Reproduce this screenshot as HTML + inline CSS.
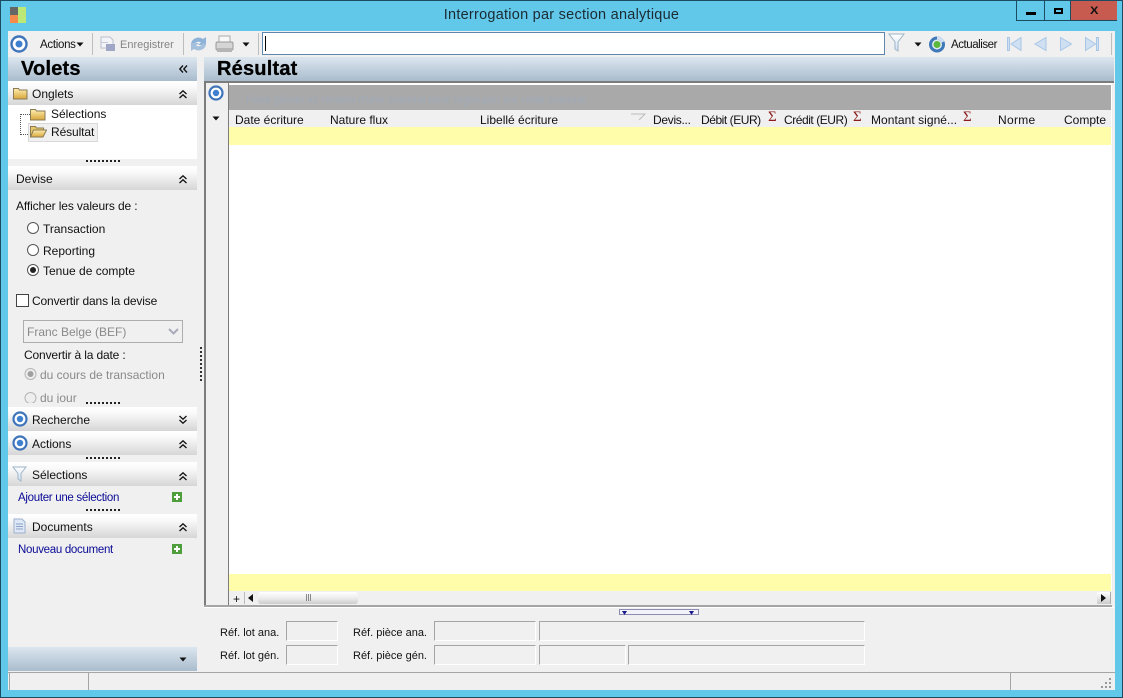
<!DOCTYPE html>
<html lang="fr"><head><meta charset="utf-8"><title>Interrogation par section analytique</title>
<style>
html,body{margin:0;padding:0;width:1123px;height:698px;overflow:hidden;background:#62c8ea}
body{position:relative;font-family:"Liberation Sans",sans-serif;font-size:12px;color:#111}
.a,.t,svg{position:absolute}
.t{white-space:nowrap;line-height:14px}
.ph{position:absolute;left:8px;width:189px;height:24px;background:linear-gradient(#fff,#fafafa 25%,#d6d6d6)}
.grip{position:absolute;left:86px;width:34px;height:2px;background:repeating-linear-gradient(90deg,#222 0 2px,transparent 2px 4px)}
.fld{position:absolute;height:20px;box-sizing:border-box;border:1px solid #a5a5a5;border-right-color:#fff;border-bottom-color:#fff;background:#f0f0f0}
.sig{position:absolute;color:#8b1a1a;font-size:15px;line-height:14px;font-family:"Liberation Serif",serif}
.g{color:#8a8a8a}
.l{color:#0a0a96;font-size:11.5px;letter-spacing:-.3px}
.h{letter-spacing:-.05px}
.big{font-size:20px;line-height:23px;font-weight:bold;color:#000;letter-spacing:.2px;-webkit-text-stroke:.3px #000}
</style></head>
<body>
<svg width="0" height="0" style="left:0;top:0"><defs>
<linearGradient id="gold" x1="0" y1="0" x2="0" y2="1"><stop offset="0" stop-color="#fdeeb0"/><stop offset="1" stop-color="#d9a63a"/></linearGradient>
<linearGradient id="bl" x1="0" y1="0" x2="0" y2="1"><stop offset="0" stop-color="#fff"/><stop offset="1" stop-color="#cfe0f3"/></linearGradient>
</defs></svg>

<div class="a" style="left:0;top:0;width:1121px;height:696px;border:1px solid #1d4c62"></div>

<div class="a" style="left:10px;top:7px;width:8px;height:9px;background:#666"></div>
<div class="a" style="left:10px;top:15px;width:8px;height:8px;background:#f58a4b"></div>
<div class="a" style="left:18px;top:7px;width:8px;height:16px;background:#bce878"></div>
<div class="t" style="left:0;width:1123px;text-align:center;top:7px;font-size:14.5px;line-height:17px;letter-spacing:.25px;color:#1b2a33">Interrogation par section analytique</div>

<div class="a" style="left:1016px;top:0;width:101px;height:21px;border:1px solid #1d4c62;box-sizing:border-box"></div>
<div class="a" style="left:1044px;top:0;width:1px;height:21px;background:#1d4c62"></div>
<div class="a" style="left:1070px;top:1px;width:46px;height:19px;background:#c75b50;border-left:1px solid #1d4c62"></div>
<div class="a" style="left:1026px;top:12px;width:10px;height:3px;background:#000"></div>
<div class="a" style="left:1054px;top:8px;width:5px;height:2px;border:2px solid #000;border-top-width:2px"></div>
<div class="t" style="left:1090px;top:4px;font-weight:bold;font-size:11px;color:#111;transform:scaleX(1.15);transform-origin:0 0">X</div>

<div class="a" style="left:8px;top:31px;width:1107px;height:659px;background:#f0f0f0"></div>

<!-- toolbar -->
<svg style="left:9px;top:34px" width="20" height="20"><circle cx="10" cy="10" r="7.5" fill="#fff" stroke="#3f74bb" stroke-width="2.4"/><circle cx="10" cy="10" r="3.500" fill="#3f7fd0"/></svg>
<div class="t" style="left:40px;top:38px;font-size:11.5px;letter-spacing:-.3px">Actions</div>
<svg style="left:76px;top:42px" width="9" height="5"><path d="M0.5 0.5h7l-3.500 4z" fill="#111"/></svg>
<div class="a" style="left:92px;top:33px;width:1px;height:22px;background:#bdbdbd"></div>
<svg style="left:99px;top:35px" width="18" height="18"><path d="M2 2h9l3 3v8H2z" fill="#f3f4f7" stroke="#b8c0cc"/><rect x="7" y="9" width="9" height="7" fill="#9fa6c6"/><rect x="2" y="7" width="7" height="1" fill="#c5cbd6"/></svg>
<div class="t" style="left:120px;top:38px;font-size:11px;color:#858585">Enregistrer</div>
<div class="a" style="left:183px;top:33px;width:1px;height:22px;background:#bdbdbd"></div>
<svg style="left:189px;top:35px" width="19" height="18"><path d="M2 9a7.500 7 0 0 1 12-5l3-2v8h-8l3-2.500a4.500 4 0 0 0-7 2.500z" fill="#8fb3d8"/><path d="M17 9a7.500 7 0 0 1-12 5l-3 2V8h8l-3 2.500a4.500 4 0 0 0 7-2.500z" fill="#a5c0dc"/></svg>
<svg style="left:214px;top:34px" width="20" height="20"><rect x="5" y="2" width="11" height="7" fill="#f8f8f8" stroke="#aaa"/><rect x="2" y="8" width="17" height="8" rx="1.500" fill="#d5d5d5" stroke="#999"/><rect x="3" y="14" width="15" height="4" fill="#b5b5b5"/></svg>
<svg style="left:242px;top:42px" width="9" height="5"><path d="M0.5 0.5h7l-3.500 4z" fill="#111"/></svg>
<div class="a" style="left:258px;top:33px;width:1px;height:22px;background:#bdbdbd"></div>
<div class="a" style="left:262px;top:32px;width:623px;height:23px;box-sizing:border-box;border:1px solid #5f86ad;background:#fff"></div>
<div class="a" style="left:265px;top:36px;width:1px;height:15px;background:#000"></div>
<svg style="left:888px;top:33px" width="18" height="20"><path d="M1 1h15l-6 8v9l-3-2V9z" fill="url(#bl)" stroke="#9db4c6"/></svg>
<svg style="left:914px;top:42px" width="9" height="5"><path d="M0.5 0.5h7l-3.500 4z" fill="#111"/></svg>
<svg style="left:928px;top:35px" width="18" height="18"><circle cx="9" cy="9.500" r="6.500" fill="#dfe9f2" stroke="#3f78b8" stroke-width="3"/><path d="M9 3a6.500 6.500 0 0 1 6 4" fill="none" stroke="#cfe0f0" stroke-width="3"/><circle cx="9" cy="9.500" r="3.500" fill="#5cb83c"/></svg>
<div class="t" style="left:951px;top:38px;font-size:11.5px;letter-spacing:-.45px">Actualiser</div>
<svg style="left:1006px;top:36px" width="110" height="16" fill="#cfe0f3" stroke="#a9c6e6"><rect x="1.500" y="1.500" width="2" height="13"/><path d="M15 1.500v13l-10-6.500z"/><path d="M40 1.500v13l-11-6.500z"/><path d="M54.500 1.500v13l11-6.500z"/><path d="M79.500 1.500v13l10-6.500z"/><rect x="90.500" y="1.500" width="2" height="13"/></svg>
<div class="a" style="left:1111px;top:33px;width:1px;height:22px;background:#bdbdbd"></div>

<!-- left panel -->
<div class="a" style="left:8px;top:57px;width:189px;height:24px;background:linear-gradient(#dce6ef,#a9bccd)"></div>
<div class="t big" style="left:21px;top:58px">Volets</div>
<svg style="left:179px;top:65px" width="9" height="9" fill="none" stroke="#111" stroke-width="1.300"><path d="M4 .5L.8 4 4 7.500M8 .5L4.800 4 8 7.500"/></svg>

<div class="ph" style="top:81px"></div>
<svg style="left:13px;top:86px" width="15" height="14"><path d="M.5 2.500h5l1 1.500h7.500v9H.5z" fill="url(#gold)" stroke="#8a7a55"/></svg>
<div class="t" style="left:32px;top:87px">Onglets</div>
<svg style="left:179px;top:90px" width="8" height="9" fill="none" stroke="#111" stroke-width="1.300"><path d="M.5 4L4 .8 7.500 4M.5 8L4 4.800 7.500 8"/></svg>
<div class="a" style="left:8px;top:105px;width:189px;height:54px;background:#fff"></div>
<div class="a" style="left:20px;top:114px;width:9px;height:19px;border-left:1px dotted #555;border-top:1px dotted #555;border-bottom:1px dotted #555"></div>
<svg style="left:30px;top:108px" width="16" height="13"><path d="M.5 1.500h5l1 1.500h8.500v9H.5z" fill="url(#gold)" stroke="#8a7a55"/></svg>
<div class="t" style="left:51px;top:107px">Sélections</div>
<div class="a" style="left:28px;top:123px;width:68px;height:17px;background:#f0f0f0;border:1px solid #d9d9d9"></div>
<svg style="left:30px;top:125px" width="17" height="13"><path d="M.5 1.500h5l1 1.500h7v2H4l-3.500 7z" fill="#e8c868" stroke="#8a7a55"/><path d="M3.500 5h13l-3.500 7H.5z" fill="url(#gold)" stroke="#8a7a55"/></svg>
<div class="t" style="left:51px;top:125px;letter-spacing:-.1px">Résultat</div>
<div class="grip" style="top:160px"></div>

<div class="ph" style="top:166px"></div>
<div class="t" style="left:16px;top:172px">Devise</div>
<svg style="left:179px;top:175px" width="8" height="9" fill="none" stroke="#111" stroke-width="1.300"><path d="M.5 4L4 .8 7.500 4M.5 8L4 4.800 7.500 8"/></svg>

<div class="t" style="left:16px;top:199px;letter-spacing:-.12px">Afficher les valeurs de :</div>
<svg style="left:26px;top:221px" width="14" height="60"><circle cx="7" cy="7" r="5.500" fill="#fff" stroke="#555"/><circle cx="7" cy="29" r="5.500" fill="#fff" stroke="#555"/><circle cx="7" cy="49" r="5.500" fill="#fff" stroke="#555"/><circle cx="7" cy="49" r="3" fill="#222"/></svg>
<div class="t" style="left:43px;top:222px">Transaction</div>
<div class="t" style="left:43px;top:244px">Reporting</div>
<div class="t" style="left:43px;top:264px">Tenue de compte</div>
<div class="a" style="left:16px;top:294px;width:11px;height:11px;border:1px solid #444;background:#fff"></div>
<div class="t" style="left:32px;top:294px;letter-spacing:-.15px">Convertir dans la devise</div>
<div class="a" style="left:23px;top:320px;width:160px;height:23px;box-sizing:border-box;border:1px solid #adadad;background:#f0f0f0"></div>
<div class="t g" style="left:27px;top:325px">Franc Belge (BEF)</div>
<svg style="left:168px;top:328px" width="11" height="8"><path d="M1 1l4.500 4.500L10 1" fill="none" stroke="#aab" stroke-width="2"/></svg>
<div class="t" style="left:24px;top:348px;letter-spacing:-.15px">Convertir à la date :</div>
<svg style="left:24px;top:367px" width="14" height="14"><circle cx="6.500" cy="7" r="5.500" fill="#eee" stroke="#b5b5b5"/><circle cx="6.500" cy="7" r="3" fill="#a0a0a0"/></svg>
<div class="t g" style="left:40px;top:368px">du cours de transaction</div>
<div class="a" style="left:8px;top:390px;width:189px;height:13px;overflow:hidden">
  <svg style="left:16px;top:1px" width="14" height="14"><circle cx="6.500" cy="7" r="5.500" fill="#eee" stroke="#b5b5b5"/></svg>
  <div class="t g" style="left:32px;top:1px">du jour</div>
</div>
<div class="a" style="left:200px;top:347px;width:2px;height:34px;background:repeating-linear-gradient(#333 0 2px,transparent 2px 4px)"></div>
<div class="grip" style="top:402px"></div>

<div class="ph" style="top:407px"></div>
<svg style="left:11px;top:410px" width="18" height="18"><circle cx="9" cy="9" r="6.500" fill="#fff" stroke="#3f74bb" stroke-width="2.200"/><circle cx="9" cy="9" r="3.200" fill="#3f7fd0"/></svg>
<div class="t" style="left:32px;top:413px">Recherche</div>
<svg style="left:179px;top:415px" width="8" height="9" fill="none" stroke="#111" stroke-width="1.300"><path d="M.5 1L4 4.200 7.500 1M.5 5L4 8.200 7.500 5"/></svg>

<div class="ph" style="top:431px"></div>
<svg style="left:11px;top:434px" width="18" height="18"><circle cx="9" cy="9" r="6.500" fill="#fff" stroke="#3f74bb" stroke-width="2.200"/><circle cx="9" cy="9" r="3.200" fill="#3f7fd0"/></svg>
<div class="t" style="left:32px;top:437px">Actions</div>
<svg style="left:179px;top:440px" width="8" height="9" fill="none" stroke="#111" stroke-width="1.300"><path d="M.5 4L4 .8 7.500 4M.5 8L4 4.800 7.500 8"/></svg>
<div class="grip" style="top:457px"></div>

<div class="ph" style="top:462px"></div>
<svg style="left:12px;top:466px" width="16" height="16"><path d="M1 1h13l-5 6.500V15l-3-2V7.500z" fill="url(#bl)" stroke="#9db4c6"/></svg>
<div class="t" style="left:32px;top:468px">Sélections</div>
<svg style="left:179px;top:472px" width="8" height="9" fill="none" stroke="#111" stroke-width="1.300"><path d="M.5 4L4 .8 7.500 4M.5 8L4 4.800 7.500 8"/></svg>
<div class="t l" style="left:18px;top:491px">Ajouter une sélection</div>
<div class="a" style="left:172px;top:492px;width:10px;height:10px;background:#4e9e3e"></div>
<div class="a" style="left:174px;top:496px;width:6px;height:2px;background:#fff"></div>
<div class="a" style="left:176px;top:494px;width:2px;height:6px;background:#fff"></div>
<div class="grip" style="top:509px"></div>

<div class="ph" style="top:514px"></div>
<svg style="left:13px;top:518px" width="14" height="16"><path d="M1 1h8l3 3v11H1z" fill="#dfe8f6" stroke="#9eb0cc"/><path d="M3 6h7M3 8.500h7M3 11h7" stroke="#8aa0c4"/></svg>
<div class="t" style="left:32px;top:520px">Documents</div>
<svg style="left:179px;top:523px" width="8" height="9" fill="none" stroke="#111" stroke-width="1.300"><path d="M.5 4L4 .8 7.500 4M.5 8L4 4.800 7.500 8"/></svg>
<div class="t l" style="left:18px;top:543px">Nouveau document</div>
<div class="a" style="left:172px;top:544px;width:10px;height:10px;background:#4e9e3e"></div>
<div class="a" style="left:174px;top:548px;width:6px;height:2px;background:#fff"></div>
<div class="a" style="left:176px;top:546px;width:2px;height:6px;background:#fff"></div>

<div class="a" style="left:8px;top:647px;width:189px;height:24px;background:linear-gradient(#dce6ef,#a9bccd)"></div>
<svg style="left:179px;top:657px" width="9" height="5"><path d="M0.500 0.500h7l-3.500 4z" fill="#111"/></svg>

<!-- right panel -->
<div class="a" style="left:204px;top:57px;width:910px;height:24px;background:linear-gradient(#dce6ef,#a9bccd)"></div>
<div class="a" style="left:204px;top:81px;width:910px;height:2px;background:#7c7c7c"></div>
<div class="t big" style="left:217px;top:58px">Résultat</div>

<div class="a" style="left:204px;top:83px;width:2px;height:522px;background:#7c7c7c"></div>
<div class="a" style="left:206px;top:83px;width:22px;height:522px;background:#f0f0f0"></div>
<div class="a" style="left:228px;top:83px;width:1px;height:522px;background:#7c7c7c"></div>
<div class="a" style="left:229px;top:83px;width:883px;height:508px;background:#fff"></div>
<svg style="left:207px;top:84px" width="18" height="18"><circle cx="9" cy="9" r="6.500" fill="#fff" stroke="#3f74bb" stroke-width="2.200"/><circle cx="9" cy="9" r="3.200" fill="#3f7fd0"/></svg>
<svg style="left:212px;top:116px" width="9" height="5"><path d="M0.500 0.500h7l-3.500 4z" fill="#111"/></svg>

<div class="a" style="left:229px;top:85px;width:882px;height:25px;background:#a9a9a9"></div>
<div class="t" style="left:246px;top:93px;font-size:11px;letter-spacing:-.08px;color:#9fa9b8">Faire glisser ici l'entête d'une colonne pour regrouper sur cette colonne</div>
<div class="a" style="left:229px;top:110px;width:882px;height:17px;background:#f0f0f0;overflow:hidden">
  <div class="t" style="left:6px;top:3px">Date écriture</div>
  <div class="t" style="left:101px;top:3px">Nature flux</div>
  <div class="t" style="left:251px;top:3px">Libellé écriture</div>
  <div class="t" style="left:424px;top:3px;letter-spacing:-.3px">Devis...</div>
  <div class="t" style="left:472px;top:3px;letter-spacing:-.45px">Débit (EUR)</div>
  <div class="t" style="left:555px;top:3px;letter-spacing:-.45px">Crédit (EUR)</div>
  <div class="t" style="left:642px;top:3px;letter-spacing:.05px">Montant signé...</div>
  <div class="t" style="left:769px;top:3px;letter-spacing:.3px">Norme</div>
  <div class="t" style="left:835px;top:3px">Compte</div>
</div>
<svg style="left:630px;top:113px" width="17" height="9"><path d="M1 1h14L9 7" fill="none" stroke="#bdbdbd"/></svg>
<div class="sig" style="left:768px;top:110px">Σ</div>
<div class="sig" style="left:853px;top:110px">Σ</div>
<div class="sig" style="left:963px;top:110px">Σ</div>
<div class="a" style="left:229px;top:127px;width:882px;height:18px;background:#fffdaa"></div>
<div class="a" style="left:229px;top:574px;width:882px;height:17px;background:#fffdaa"></div>

<div class="a" style="left:229px;top:591px;width:883px;height:13px;background:#f0f0f0"></div>
<div class="a" style="left:204px;top:605px;width:908px;height:2px;background:#a5a5a5"></div>
<div class="a" style="left:204px;top:607px;width:910px;height:1px;background:#fff"></div>
<div class="t" style="left:233px;top:592px;font-size:12px">+</div>
<div class="a" style="left:244px;top:592px;width:1px;height:12px;background:#bbb"></div>
<svg style="left:248px;top:594px" width="6" height="8"><path d="M5 0v8L0 4z" fill="#111"/></svg>
<div class="a" style="left:258px;top:592px;width:100px;height:12px;border-radius:3px;background:linear-gradient(#fff,#e8e8e8 60%,#ccc)"></div>
<div class="a" style="left:306px;top:594px;width:5px;height:7px;background:repeating-linear-gradient(90deg,#888 0 1px,transparent 1px 2px)"></div>
<div class="a" style="left:1097px;top:592px;width:13px;height:12px;background:linear-gradient(#fff,#ccc);border-right:1px solid #aaa"></div>
<svg style="left:1100px;top:594px" width="6" height="8"><path d="M1 0v8l5-4z" fill="#111"/></svg>

<div class="a" style="left:619px;top:609px;width:78px;height:4px;border:1px solid #8c8cb0;background:#f2f2f8"></div>
<svg style="left:622px;top:611px" width="74" height="4" fill="#1a1a8c"><path d="M0 0h5L2.500 4zM67 0h5l-2.500 4z"/></svg>

<div class="t" style="left:220px;top:626px;font-size:11px">Réf. lot ana.</div>
<div class="t" style="left:220px;top:649px;font-size:11px">Réf. lot gén.</div>
<div class="t" style="left:353px;top:626px;font-size:11px">Réf. pièce ana.</div>
<div class="t" style="left:353px;top:649px;font-size:11px">Réf. pièce gén.</div>
<div class="fld" style="left:286px;top:621px;width:52px"></div>
<div class="fld" style="left:286px;top:645px;width:52px"></div>
<div class="fld" style="left:434px;top:621px;width:102px"></div>
<div class="fld" style="left:434px;top:645px;width:102px"></div>
<div class="fld" style="left:539px;top:621px;width:326px"></div>
<div class="fld" style="left:539px;top:645px;width:87px"></div>
<div class="fld" style="left:628px;top:645px;width:237px"></div>

<!-- status bar -->
<div class="a" style="left:8px;top:672px;width:1107px;height:1px;background:#a5a5a5"></div>
<div class="a" style="left:9px;top:672px;width:1px;height:18px;background:#a5a5a5"></div>
<div class="a" style="left:88px;top:672px;width:1px;height:18px;background:#a5a5a5"></div>
<div class="a" style="left:1010px;top:672px;width:1px;height:18px;background:#a5a5a5"></div>
<svg style="left:1100px;top:677px" width="12" height="12" fill="#999"><rect x="9" y="1" width="2" height="2"/><rect x="5" y="5" width="2" height="2"/><rect x="9" y="5" width="2" height="2"/><rect x="1" y="9" width="2" height="2"/><rect x="5" y="9" width="2" height="2"/><rect x="9" y="9" width="2" height="2"/></svg>
</body></html>
